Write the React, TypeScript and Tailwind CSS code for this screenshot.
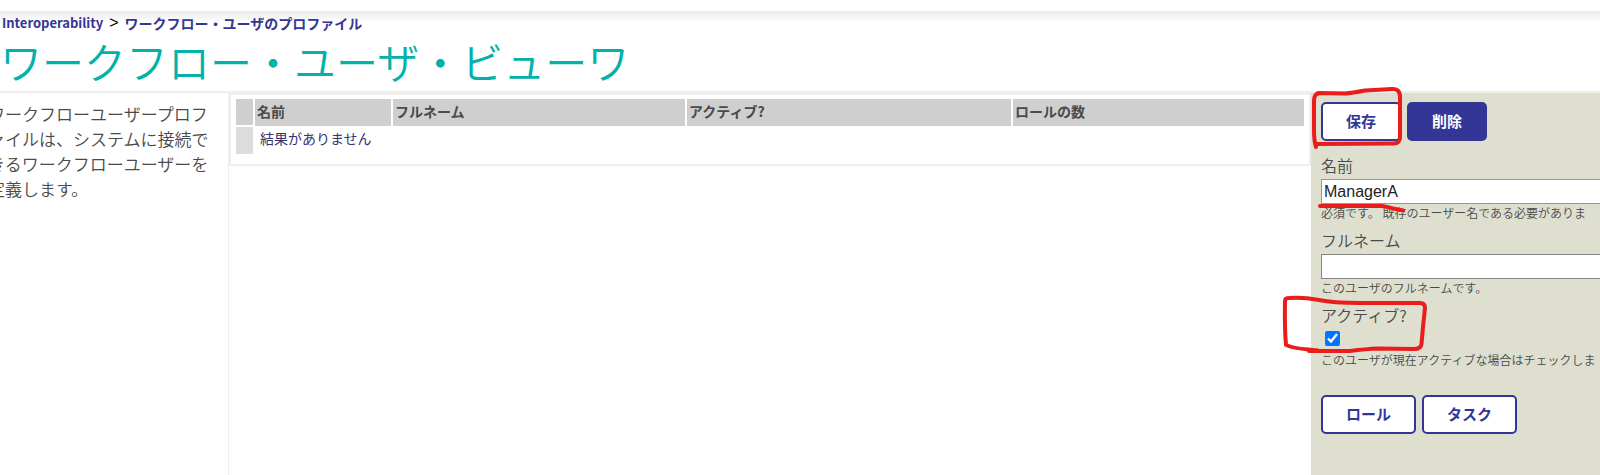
import { useState } from 'react';
import type { ReactNode } from 'react';
import clsx from 'clsx';

const COLUMNS = [
  { label: '名前', width: 'w-[138px]' },
  { label: 'フルネーム', width: 'w-[294px]' },
  { label: 'アクティブ?', width: 'w-[326px]' },
  { label: 'ロールの数', width: 'w-[292px]' },
];

interface ActionButtonProps {
  children: ReactNode;
  primary?: boolean;
}

function ActionButton({ children, primary = false }: ActionButtonProps) {
  return (
    <button
      type="button"
      className={clsx(
        'h-[39px] shrink-0 cursor-pointer rounded-[5px] border-2 border-[#333695] px-[23px] text-[15px] font-bold',
        primary ? 'bg-[#333695] text-white' : 'bg-white text-[#333695]',
      )}
    >
      {children}
    </button>
  );
}

interface TextFieldProps {
  id: string;
  label: string;
  hint: string;
  value: string;
  onChange: (value: string) => void;
  highlighted?: boolean;
}

function TextField({ id, label, hint, value, onChange, highlighted = false }: TextFieldProps) {
  return (
    <div>
      <label htmlFor={id} className="block pb-[2px] text-base leading-6">
        {label}
      </label>
      <input
        id={id}
        type="text"
        value={value}
        onChange={e => onChange(e.target.value)}
        className={clsx(
          "block h-[25px] w-80 border bg-white px-[2px] font-['Liberation_Sans',Arial,sans-serif] text-base text-[#222] outline-none",
          highlighted ? 'border-[#8f8fd0]' : 'border-[#858585]',
        )}
      />
      <p className="text-xs leading-[18px] whitespace-nowrap">{hint}</p>
    </div>
  );
}

// Hand-drawn marker strokes over the controls to be filled in
function MarkerStrokes() {
  return (
    <svg
      className="pointer-events-none absolute -top-[10px] -left-[31px]"
      width="160"
      height="280"
      viewBox="1280 83 160 280"
      fill="none"
      stroke="#ea1c1c"
      strokeWidth="4"
      strokeLinecap="round"
      strokeLinejoin="round"
      aria-hidden="true"
    >
      <path d="M1316 147 Q1314 141 1314 130 L1314 101 Q1314 94 1319 93 L1345 93.5 Q1352 93 1365 90.5 L1392 89 Q1400 88.500 1400 97 L1400 138 Q1399 144 1393 143.500 L1317 144" />
      <path d="M1320 206 L1382 206 Q1388 207 1393 208.500 L1403 210.500" />
      <path d="M1318 350.500 L1308 349.500 Q1294 348 1290 346.500 L1286 345 Q1284.500 330 1285 301 Q1285 298 1289 298 Q1303 297 1319 300 Q1333 303 1360 303 L1420 303 Q1425 303 1425 308 Q1423 325 1421.500 344 Q1421 349 1414 349 L1378 348.500 Q1366 349 1350 351 L1309 351" />
    </svg>
  );
}

export default function App() {
  const [name, setName] = useState('ManagerA');
  const [fullName, setFullName] = useState('');
  const [active, setActive] = useState(true);

  return (
    <div
      lang="ja"
      className="flex min-h-screen flex-col overflow-hidden bg-white pt-[11px] font-['Noto_Sans_CJK_JP',sans-serif] text-[#4a4a4a]"
    >
      <header className="h-20 bg-linear-to-b from-[#ebebeb] to-white to-15%">
        <nav className="flex h-6 items-center gap-[6px] pl-[2px] text-sm font-bold text-[#333695]">
          <a href="#interoperability" className="text-[13px]">
            Interoperability
          </a>
          <span className="font-['Liberation_Sans',sans-serif] text-base font-normal text-black">&gt;</span>
          <a href="#profile">ワークフロー・ユーザのプロファイル</a>
        </nav>
        <h1 className="text-[42px] leading-[52px] font-[350] whitespace-nowrap text-[#00b2a9]">
          ワークフロー・ユーザ・ビューワ
        </h1>
      </header>

      <div className="flex flex-1 border-t-2 border-[#eeeeee]">
        <aside className="w-[229px] shrink-0 border-r border-[#eeeeee] pt-2">
          <p className="-ml-3 w-[222px] text-[17px] leading-[25px] font-[350]">
            ワークフローユーザープロファイルは、システムに接続できるワークフローユーザーを定義します。
          </p>
        </aside>

        <main className="min-w-0 flex-1">
          <div className="border-2 border-[#f0f0e6] px-[5px] pt-1 pb-[10px]">
            <table className="w-full table-fixed border-collapse text-left text-sm">
              <thead>
                <tr className="h-[27px]">
                  <th className="w-[18px] border-r-2 border-white bg-[#cfcfcf]" />
                  {COLUMNS.map(({ label, width }) => (
                    <th
                      key={label}
                      className={clsx(
                        'border-r-2 border-white bg-[#cfcfcf] px-[2px] pb-1 leading-5 font-bold last:border-r-0',
                        width,
                      )}
                    >
                      {label}
                    </th>
                  ))}
                </tr>
              </thead>
              <tbody>
                <tr className="h-7">
                  <td className="border-t-2 border-r-2 border-white bg-[#dcdcdc]" />
                  <td colSpan={4} className="px-[5px] pb-1 leading-5 text-[#333670]">
                    結果がありません
                  </td>
                </tr>
              </tbody>
            </table>
          </div>
        </main>

        <section className="relative w-[289px] shrink-0">
          <form className="h-full overflow-hidden bg-[#dedfcf] pt-[9px] pl-[10px]">
            <div className="mb-3 flex gap-[6px]">
              <ActionButton>保存</ActionButton>
              <ActionButton primary>削除</ActionButton>
            </div>
            <div className="flex flex-col gap-[6px] font-[350]">
              <TextField
                id="name"
                label="名前"
                hint="必須です。 既存のユーザー名である必要がありま"
                value={name}
                onChange={setName}
                highlighted
              />
              <TextField
                id="full-name"
                label="フルネーム"
                hint="このユーザのフルネームです。"
                value={fullName}
                onChange={setFullName}
              />
              <div>
                <label htmlFor="active" className="block pb-[2px] text-base leading-6">
                  アクティブ?
                </label>
                <div className="flex h-[22px] items-start pt-[2px] pl-1">
                  <input
                    id="active"
                    type="checkbox"
                    checked={active}
                    onChange={e => setActive(e.target.checked)}
                    className="size-[15px]"
                  />
                </div>
                <p className="text-xs leading-[18px] whitespace-nowrap">
                  このユーザが現在アクティブな場合はチェックしま
                </p>
              </div>
            </div>
            <div className="mt-[26px] flex gap-[6px]">
              <ActionButton>ロール</ActionButton>
              <ActionButton>タスク</ActionButton>
            </div>
          </form>
          <MarkerStrokes />
        </section>
      </div>
    </div>
  );
}
